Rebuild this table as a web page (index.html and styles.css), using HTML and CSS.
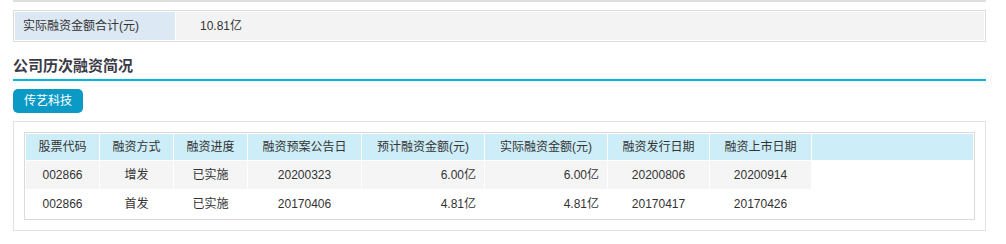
FILE: index.html
```html
<!DOCTYPE html>
<html lang="zh-CN">
<head>
<meta charset="utf-8">
<title>融资</title>
<link rel="stylesheet" href="styles.css">
</head>
<body>
<div class="page">
  <div class="prev-box"></div>
  <div class="info-box">
    <div class="info-label">实际融资金额合计(元)</div>
    <div class="info-value">10.81亿</div>
  </div>
  <h2 class="section-title">公司历次融资简况</h2>
  <div class="tabs"><span class="tab">传艺科技</span></div>
  <div class="panel">
    <div class="tbl">
      <div class="tr th">
        <div class="c">股票代码</div>
        <div class="c">融资方式</div>
        <div class="c">融资进度</div>
        <div class="c">融资预案公告日</div>
        <div class="c">预计融资金额(元)</div>
        <div class="c">实际融资金额(元)</div>
        <div class="c">融资发行日期</div>
        <div class="c">融资上市日期</div>
        <div class="c fill"></div>
      </div>
      <div class="tr odd">
        <div class="c">002866</div>
        <div class="c">增发</div>
        <div class="c">已实施</div>
        <div class="c">20200323</div>
        <div class="c num">6.00亿</div>
        <div class="c num">6.00亿</div>
        <div class="c">20200806</div>
        <div class="c">20200914</div>
        <div class="fill"></div>
      </div>
      <div class="tr">
        <div class="c">002866</div>
        <div class="c">首发</div>
        <div class="c">已实施</div>
        <div class="c">20170406</div>
        <div class="c num">4.81亿</div>
        <div class="c num">4.81亿</div>
        <div class="c">20170417</div>
        <div class="c">20170426</div>
        <div class="fill"></div>
      </div>
    </div>
  </div>
</div>
</body>
</html>
```
FILE: styles.css
```css
html, body {
  margin: 0;
  padding: 0;
  background: #fff;
}
body {
  font-family: "Liberation Sans", "Noto Sans CJK SC", sans-serif;
  font-size: 12px;
  color: #333;
}
.page {
  width: 973px;
  margin-left: 13px;
}
.prev-box {
  height: 0;
  border: 1px solid #dedede;
  border-top: none;
  border-bottom-width: 2px;
  margin-bottom: 8px;
}
.info-box {
  display: flex;
  gap: 1px;
  border: 1px solid #dcdcdc;
  padding: 1px;
  height: 28px;
}
.info-label {
  width: 160px;
  background: #dce8f3;
  padding-left: 8px;
  box-sizing: border-box;
  line-height: 28px;
}
.info-value {
  flex: 1;
  background: #f3f3f3;
  padding-left: 24px;
  line-height: 28px;
}
.section-title {
  margin: 0;
  padding-top: 11px;
  line-height: 26px;
  font-size: 15px;
  font-weight: bold;
  color: #3b3b48;
  border-bottom: 2px solid #00b6de;
}
.tabs {
  margin: 8px 0 8px;
  height: 24px;
}
.tab {
  display: inline-block;
  width: 70px;
  height: 24px;
  line-height: 24px;
  text-align: center;
  background: #0b9ac6;
  color: #fff;
  border-radius: 5px;
  font-size: 12px;
}
.panel {
  border: 1px solid #e2e2e2;
  padding: 10px;
}
.tbl {
  border: 1px solid #dadada;
  padding: 1px;
  display: flex;
  flex-direction: column;
  gap: 1px;
}
.tr {
  display: grid;
  grid-template-columns: 73px 73px 73px 113px 122px 122px 101px 101px 1fr;
  gap: 1px;
  height: 28px;
}
.tr.th {
  height: 26px;
}
.c {
  text-align: center;
  line-height: 28px;
  white-space: nowrap;
}
.th .c {
  background: #cdedf8;
  line-height: 26px;
}
.odd .c {
  background: #f5f5f5;
}
.c.num {
  text-align: right;
  padding-right: 8px;
}
```
